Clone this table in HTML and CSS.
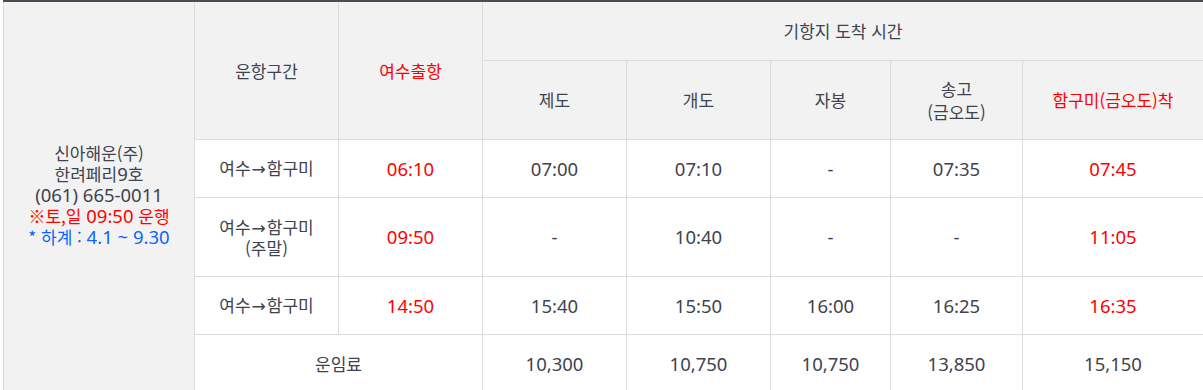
FILE: index.html
```html
<!DOCTYPE html>
<html lang="ko">
<head>
<meta charset="utf-8">
<link rel="stylesheet" href="styles.css">
</head>
<body>
<div class="wrap">
<table class="sched">
  <colgroup>
    <col class="c-co">
    <col class="c-std">
    <col class="c-std">
    <col class="c-std">
    <col class="c-std">
    <col class="c-b">
    <col class="c-c">
    <col class="c-d">
  </colgroup>
  <tbody>
    <tr class="h1">
      <th rowspan="6" class="company">
        신아해운(주)<br>한려페리<span class="n">9</span>호<br><span class="n">(061) 665-0011</span><br>
        <span class="red">※토,일 <span class="n">09:50</span> 운행</span><br>
        <span class="blue">* 하계 : <span class="n">4.1 ~ 9.30</span></span>
      </th>
      <th rowspan="2">운항구간</th>
      <th rowspan="2" class="red">여수출항</th>
      <th colspan="5">기항지 도착 시간</th>
    </tr>
    <tr class="h2">
      <th>제도</th>
      <th>개도</th>
      <th>자봉</th>
      <th>송고<br>(금오도)</th>
      <th class="red">함구미(금오도)착</th>
    </tr>
    <tr class="r1">
      <td>여수<span class="arr">→</span>함구미</td>
      <td class="n red">06:10</td>
      <td class="n">07:00</td>
      <td class="n">07:10</td>
      <td class="n">-</td>
      <td class="n">07:35</td>
      <td class="n red">07:45</td>
    </tr>
    <tr class="r2">
      <td>여수<span class="arr">→</span>함구미<br>(주말)</td>
      <td class="n red">09:50</td>
      <td class="n">-</td>
      <td class="n">10:40</td>
      <td class="n">-</td>
      <td class="n">-</td>
      <td class="n red">11:05</td>
    </tr>
    <tr class="r1">
      <td>여수<span class="arr">→</span>함구미</td>
      <td class="n red">14:50</td>
      <td class="n">15:40</td>
      <td class="n">15:50</td>
      <td class="n">16:00</td>
      <td class="n">16:25</td>
      <td class="n red">16:35</td>
    </tr>
    <tr class="r1">
      <td colspan="2">운임료</td>
      <td class="n">10,300</td>
      <td class="n">10,750</td>
      <td class="n">10,750</td>
      <td class="n">13,850</td>
      <td class="n">15,150</td>
    </tr>
  </tbody>
</table>
</div>
</body>
</html>
```

FILE: styles.css
```css
html, body {
  margin: 0;
  padding: 0;
  background: #fff;
}

.wrap {
  padding-left: 3px;
}

.sched {
  border-collapse: collapse;
  table-layout: fixed;
  width: 1200px;
  border-top: 2px solid #474c57;
  font-family: "Noto Sans CJK KR", "Noto Sans", sans-serif;
  font-size: 17px;
  color: #3e434e;
}

.c-co { width: 191px; }
.c-std { width: 144px; }
.c-b { width: 120px; }
.c-c { width: 132px; }
.c-d { width: 181px; }

.sched th,
.sched td {
  border: 1px solid #dcdcdc;
  text-align: center;
  vertical-align: middle;
  padding: 0;
  font-weight: normal;
}

.sched th {
  background: #f2f2f2;
  line-height: 23px;
}

.sched td {
  line-height: 19px;
}

.sched .h1 th {
  border-top: 0;
}

.sched .company {
  line-height: 21px;
  padding-bottom: 4px;
}

.n {
  font-family: "Noto Sans", "Open Sans", sans-serif;
  font-size: 18.5px;
}

.arr {
  font-family: "DejaVu Sans", sans-serif;
  font-size: 17px;
  margin: 0 1px;
}

.h1 { height: 59px; }
.h2 { height: 79px; }
.r1 { height: 58px; }
.r2 { height: 79px; }

.red { color: #ff0000; }
.blue { color: #0a64ff; }
```
